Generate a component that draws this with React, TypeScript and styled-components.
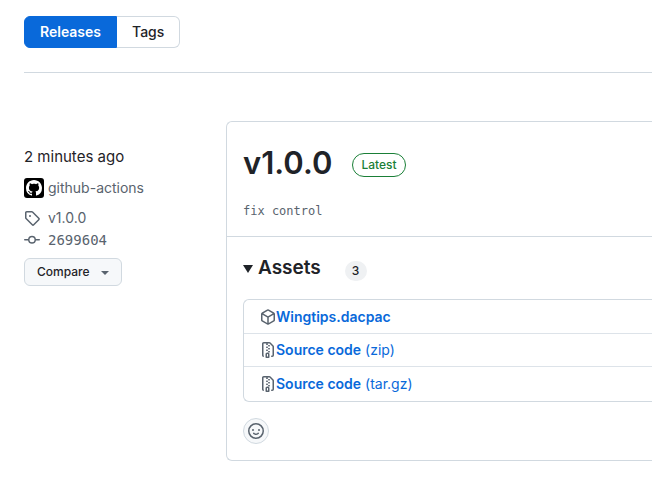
import React from "react";
import styled, { createGlobalStyle } from "styled-components";

const colors = {
  text: "#1f2328",
  muted: "#59636e",
  border: "#d1d9e0",
  softBorder: "#dde3e9",
  accent: "#0969da",
  success: "#1a7f37",
  subtle: "#f6f8fa",
};

const GlobalStyle = createGlobalStyle`
  *, *::before, *::after { box-sizing: border-box; }
  body {
    margin: 0;
    background: #ffffff;
    color: ${colors.text};
    font-family: Inter, "Liberation Sans", sans-serif;
    font-size: 14px;
    line-height: 20px;
    overflow-x: hidden;
  }
  a { text-decoration: none; }
`;

const Page = styled.div`
  padding: 16px 0 22px 24px;
`;

const TabBar = styled.nav`
  display: flex;
  padding-bottom: 24px;
  border-bottom: 1px solid ${colors.border};
`;

const Tab = styled.a<{ $selected?: boolean }>`
  padding: 5px 15px;
  border: 1px solid ${(p) => (p.$selected ? colors.accent : colors.border)};
  background: ${(p) => (p.$selected ? colors.accent : "#ffffff")};
  color: ${(p) => (p.$selected ? "#ffffff" : colors.text)};
  font-weight: ${(p) => (p.$selected ? 600 : 500)};

  &:first-child {
    border-radius: 6px 0 0 6px;
  }
  &:last-child {
    border-left: 0;
    border-radius: 0 6px 6px 0;
  }
`;

const Release = styled.section`
  display: grid;
  grid-template-columns: 178px minmax(0, 1fr);
  column-gap: 24px;
  padding-top: 48px;
`;

const Sidebar = styled.aside`
  display: flex;
  flex-direction: column;
  align-items: flex-start;
  padding-top: 24px;
`;

const Published = styled.div`
  margin-bottom: 8px;
  font-size: 15px;
  line-height: 24px;
`;

const MetaLink = styled.a<{ $mono?: boolean }>`
  display: flex;
  align-items: center;
  gap: 8px;
  height: 22px;
  color: ${colors.muted};
  font-family: ${(p) => (p.$mono ? '"DejaVu Sans Mono", monospace' : "inherit")};
`;

const Author = styled(MetaLink)`
  gap: 4px;
  margin-bottom: 8px;
`;

const Avatar = styled.span`
  display: flex;
  align-items: center;
  justify-content: center;
  width: 20px;
  height: 20px;
  border-radius: 3px;
  background: #000000;
  color: #ffffff;
`;

const CompareButton = styled.button`
  display: flex;
  align-items: center;
  gap: 11px;
  height: 28px;
  margin-top: 7px;
  padding: 0 12px;
  border: 1px solid ${colors.border};
  border-radius: 6px;
  background: ${colors.subtle};
  color: ${colors.text};
  font: 500 12px/20px Inter, "Liberation Sans", sans-serif;
`;

const Caret = styled.span`
  margin-top: 2px;
  border: 4px solid transparent;
  border-top-color: ${colors.muted};
  border-bottom: 0;
`;

const Card = styled.article`
  border: 1px solid ${colors.border};
  border-right: 0;
  border-radius: 6px 0 0 6px;
`;

const CardHead = styled.header`
  padding: 16px 16px 15px;
  border-bottom: 1px solid ${colors.border};
`;

const TitleRow = styled.div`
  display: flex;
  align-items: center;
  gap: 20px;
`;

const Title = styled.h1`
  margin: 0;
  font-size: 31px;
  line-height: 50px;
  font-weight: 600;
`;

const LatestLabel = styled.span`
  margin-top: 4px;
  padding: 0 8px;
  border: 1px solid ${colors.success};
  border-radius: 12px;
  color: ${colors.success};
  font-size: 12px;
  line-height: 22px;
  font-weight: 500;
`;

const Notes = styled.pre`
  margin: 13px 0 0;
  color: ${colors.muted};
  font: 12px/20px "DejaVu Sans Mono", monospace;
`;

const CardBody = styled.div`
  padding: 16px 0 16px 16px;
`;

const AssetsToggle = styled.summary`
  display: flex;
  align-items: center;
  list-style: none;
`;

const Disclosure = styled.span`
  margin: 2px 5px 0 0;
  border: 5px solid transparent;
  border-top: 8px solid ${colors.text};
  border-bottom: 0;
`;

const AssetsTitle = styled.h2`
  margin: 0 24px 0 0;
  font-size: 19px;
  line-height: 30px;
  font-weight: 600;
`;

const Counter = styled.span`
  min-width: 22px;
  margin-top: 6px;
  padding: 0 7px;
  border-radius: 10px;
  background: #eff1f3;
  font-size: 12px;
  font-weight: 500;
`;

const AssetList = styled.ul`
  margin: 16px 0;
  padding: 0;
  list-style: none;
  border: 1px solid ${colors.border};
  border-right: 0;
  border-radius: 6px 0 0 6px;
`;

const AssetRow = styled.li`
  display: flex;
  align-items: center;
  height: 33px;
  padding-left: 16px;
  color: ${colors.muted};

  & + & {
    border-top: 1px solid ${colors.softBorder};
  }
  &:last-child {
    height: 35px;
  }
`;

const AssetLink = styled.a`
  color: ${colors.accent};
`;

const AssetName = styled.span`
  font-weight: 600;
`;

const ReactionButton = styled.button`
  display: flex;
  align-items: center;
  justify-content: center;
  width: 26px;
  height: 26px;
  padding: 0;
  border: 1px solid ${colors.border};
  border-radius: 50%;
  background: ${colors.subtle};
  color: ${colors.muted};
`;

const IconSvg = styled.svg`
  display: block;
  flex: none;
  fill: currentColor;
`;

const icons = {
  mark: "M8 0c4.42 0 8 3.58 8 8a8.013 8.013 0 0 1-5.45 7.59c-.4.08-.55-.17-.55-.38 0-.27.01-1.13.01-2.2 0-.75-.25-1.23-.54-1.48 1.78-.2 3.65-.88 3.65-3.95 0-.88-.31-1.59-.82-2.15.08-.2.36-1.02-.08-2.12 0 0-.67-.22-2.2.82-.64-.18-1.32-.27-2-.27-.68 0-1.36.09-2 .27-1.53-1.03-2.2-.82-2.2-.82-.44 1.1-.16 1.92-.08 2.12-.51.56-.82 1.28-.82 2.15 0 3.06 1.86 3.75 3.64 3.95-.23.2-.44.55-.51 1.07-.46.21-1.61.55-2.33-.66-.15-.24-.6-.83-1.23-.82-.67.01-.27.38.01.53.34.19.73.9.82 1.13.16.45.68 1.31 2.69.94 0 .67.01 1.3.01 1.49 0 .21-.15.45-.55.38A7.995 7.995 0 0 1 0 8c0-4.42 3.58-8 8-8Z",
  tag: "M1 7.775V2.75C1 1.784 1.784 1 2.75 1h5.025c.464 0 .91.184 1.238.513l6.25 6.25a1.75 1.75 0 0 1 0 2.474l-5.026 5.026a1.75 1.75 0 0 1-2.474 0l-6.25-6.25A1.752 1.752 0 0 1 1 7.775Zm1.5 0c0 .066.026.13.073.177l6.25 6.25a.25.25 0 0 0 .354 0l5.025-5.025a.25.25 0 0 0 0-.354l-6.25-6.25a.25.25 0 0 0-.177-.073H2.75a.25.25 0 0 0-.25.25ZM6 5a1 1 0 1 1 0 2 1 1 0 0 1 0-2Z",
  commit: "M11.93 8.5a4.002 4.002 0 0 1-7.86 0H.75a.75.75 0 0 1 0-1.5h3.32a4.002 4.002 0 0 1 7.86 0h3.32a.75.75 0 0 1 0 1.5Zm-1.43-.75a2.5 2.5 0 1 0-5 0 2.5 2.5 0 0 0 5 0Z",
  package: "m8.878.392 5.25 3.045c.54.314.872.89.872 1.514v6.098a1.75 1.75 0 0 1-.872 1.514l-5.25 3.045a1.75 1.75 0 0 1-1.756 0l-5.25-3.045A1.75 1.75 0 0 1 1 11.049V4.951c0-.624.332-1.201.872-1.514L7.122.392a1.75 1.75 0 0 1 1.756 0ZM7.875 1.69l-4.63 2.685L8 7.133l4.755-2.758-4.63-2.685a.248.248 0 0 0-.25 0ZM2.5 5.677v5.372c0 .09.047.171.125.216l4.625 2.683V8.432Zm6.25 8.271 4.625-2.683a.25.25 0 0 0 .125-.216V5.677L8.75 8.432Z",
  zip: "M3.5 1.75v11.5c0 .09.048.173.126.217a.75.75 0 0 1-.752 1.298A1.748 1.748 0 0 1 2 13.25V1.75C2 .784 2.784 0 3.75 0h5.586c.464 0 .909.185 1.237.513l2.914 2.914c.329.328.513.773.513 1.237v8.586A1.75 1.75 0 0 1 12.25 15h-.5a.75.75 0 0 1 0-1.5h.5a.25.25 0 0 0 .25-.25V4.664a.25.25 0 0 0-.073-.177L9.513 1.573a.25.25 0 0 0-.177-.073H7.25a.75.75 0 0 1 0 1.5h-.5a.75.75 0 0 1 0-1.5h-3a.25.25 0 0 0-.25.25Zm3.75 8.75h.5c.966 0 1.75.784 1.75 1.75v3a.75.75 0 0 1-.75.75h-2.5a.75.75 0 0 1-.75-.75v-3c0-.966.784-1.75 1.75-1.75ZM6 5.25a.75.75 0 0 1 .75-.75h.5a.75.75 0 0 1 0 1.5h-.5A.75.75 0 0 1 6 5.25Zm.75 2.25h.5a.75.75 0 0 1 0 1.5h-.5a.75.75 0 0 1 0-1.5ZM8 6.75A.75.75 0 0 1 8.75 6h.5a.75.75 0 0 1 0 1.5h-.5A.75.75 0 0 1 8 6.75ZM8.75 3h.5a.75.75 0 0 1 0 1.5h-.5a.75.75 0 0 1 0-1.5ZM8 9.75A.75.75 0 0 1 8.75 9h.5a.75.75 0 0 1 0 1.5h-.5A.75.75 0 0 1 8 9.75Zm-1 2.5v2.25h1v-2.25a.25.25 0 0 0-.25-.25h-.5a.25.25 0 0 0-.25.25Z",
  smiley: "M8 0a8 8 0 1 1 0 16A8 8 0 0 1 8 0ZM1.5 8a6.5 6.5 0 1 0 13 0 6.5 6.5 0 0 0-13 0Zm3.82 1.636a.75.75 0 0 1 1.038.175l.007.009c.103.118.22.222.35.31.264.178.683.37 1.285.37.602 0 1.02-.192 1.285-.371.13-.088.247-.192.35-.31l.007-.008a.75.75 0 0 1 1.222.87c-.2.26-.43.49-.728.684-.474.322-1.18.63-2.136.63-.946 0-1.652-.308-2.126-.63a3.331 3.331 0 0 1-.737-.695.75.75 0 0 1 .183-1.044ZM12 7a1 1 0 1 1-2 0 1 1 0 0 1 2 0ZM5 8a1 1 0 1 1 0-2 1 1 0 0 1 0 2Z",
};

function Icon({ name }: { name: keyof typeof icons }) {
  return (
    <IconSvg width="16" height="16" viewBox="0 0 16 16" aria-hidden="true">
      <path d={icons[name]} />
    </IconSvg>
  );
}

const assets: { icon: keyof typeof icons; name: string; format?: string }[] = [
  { icon: "package", name: "Wingtips.dacpac" },
  { icon: "zip", name: "Source code", format: "(zip)" },
  { icon: "zip", name: "Source code", format: "(tar.gz)" },
];

export default function App() {
  return (
    <>
      <GlobalStyle />
      <Page>
        <TabBar aria-label="Releases and tags">
          <Tab href="#releases" $selected aria-current="page">Releases</Tab>
          <Tab href="#tags">Tags</Tab>
        </TabBar>
        <Release>
          <Sidebar>
            <Published>2 minutes ago</Published>
            <Author href="#author">
              <Avatar><Icon name="mark" /></Avatar>
              github-actions
            </Author>
            <MetaLink href="#tag"><Icon name="tag" />v1.0.0</MetaLink>
            <MetaLink href="#commit" $mono><Icon name="commit" />2699604</MetaLink>
            <CompareButton type="button">Compare<Caret /></CompareButton>
          </Sidebar>
          <Card>
            <CardHead>
              <TitleRow>
                <Title>v1.0.0</Title>
                <LatestLabel>Latest</LatestLabel>
              </TitleRow>
              <Notes>fix control</Notes>
            </CardHead>
            <CardBody>
              <details open>
                <AssetsToggle>
                  <Disclosure />
                  <AssetsTitle>Assets</AssetsTitle>
                  <Counter>3</Counter>
                </AssetsToggle>
                <AssetList>
                  {assets.map((a) => (
                    <AssetRow key={a.name + a.format}>
                      <Icon name={a.icon} />
                      <AssetLink href="#download">
                        <AssetName>{a.name}</AssetName>
                        {a.format && ` ${a.format}`}
                      </AssetLink>
                    </AssetRow>
                  ))}
                </AssetList>
              </details>
              <ReactionButton type="button" aria-label="Add a reaction">
                <Icon name="smiley" />
              </ReactionButton>
            </CardBody>
          </Card>
        </Release>
      </Page>
    </>
  );
}
